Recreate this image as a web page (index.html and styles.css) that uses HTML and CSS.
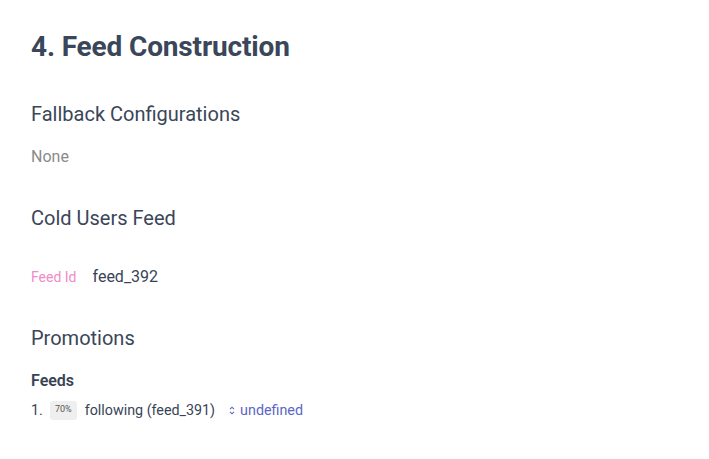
FILE: index.html
```html
<!DOCTYPE html>
<html>
<head>
<meta charset="utf-8">
<link rel="stylesheet" href="styles.css">
</head>
<body>
<main class="page">
  <h1 class="title">4. Feed Construction</h1>
  <section class="section">
    <h2 class="heading">Fallback Configurations</h2>
    <p class="muted">None</p>
  </section>
  <section class="section">
    <h2 class="heading">Cold Users Feed</h2>
    <div class="field">
      <span class="field-label">Feed Id</span>
      <span class="field-value">feed_392</span>
    </div>
  </section>
  <section class="section">
    <h2 class="heading">Promotions</h2>
    <h3 class="subheading">Feeds</h3>
    <ol class="feed-list">
      <li class="feed-item">
        <span class="num">1.</span>
        <span class="badge">70%</span>
        <span class="feed-name">following (feed_391)</span>
        <span class="sort">
          <svg width="6" height="9" viewBox="0 0 6 9"><path d="M1 3.2 L3 1.2 L5 3.2 M1 5.8 L3 7.8 L5 5.8" fill="none" stroke="#5b67c2" stroke-width="1.1"/></svg>
          <span class="link">undefined</span>
        </span>
      </li>
    </ol>
  </section>
</main>
</body>
</html>
```
FILE: styles.css
```css
* { box-sizing: border-box; }
body {
  margin: 0;
  background: #fff;
  font-family: Roboto, "Liberation Sans", sans-serif;
  color: #384456;
}
.page {
  padding: 29px 31px;
}
.title {
  margin: 0;
  font-size: 28px;
  font-weight: 700;
  letter-spacing: -0.15px;
  line-height: 36px;
  color: #3a4659;
}
.heading {
  margin: 35px 0 0;
  font-size: 20px;
  font-weight: 400;
  line-height: 28px;
  color: #3a4659;
}
.muted {
  margin: 17px 0 0;
  font-size: 16px;
  line-height: 24px;
  color: #8a8a8a;
}
.field {
  margin-top: 33px;
  display: flex;
  align-items: baseline;
  gap: 16px;
  line-height: 24px;
}
.field-label { font-size: 14px; color: #ee8cc8; }
.field-value { font-size: 16px; color: #384456; }
.subheading {
  margin: 17px 0 0;
  font-size: 16px;
  font-weight: 600;
  line-height: 24px;
  color: #384456;
}
.feed-list { list-style: none; margin: 5px 0 0; padding: 0; }
.feed-item {
  display: flex;
  align-items: center;
  font-size: 14.3px;
  color: #384456;
  line-height: 24px;
}
.num { width: 19px; }
.badge {
  font-size: 9px;
  background: #efefef;
  border-radius: 3px;
  padding: 2px 5px 0;
  height: 19px;
  line-height: 12px;
  color: #555;
  margin-right: 8px;
}
.feed-name { margin-right: 14px; }
.sort { display: flex; align-items: center; gap: 5px; }
.link { color: #5b67c2; }
```
